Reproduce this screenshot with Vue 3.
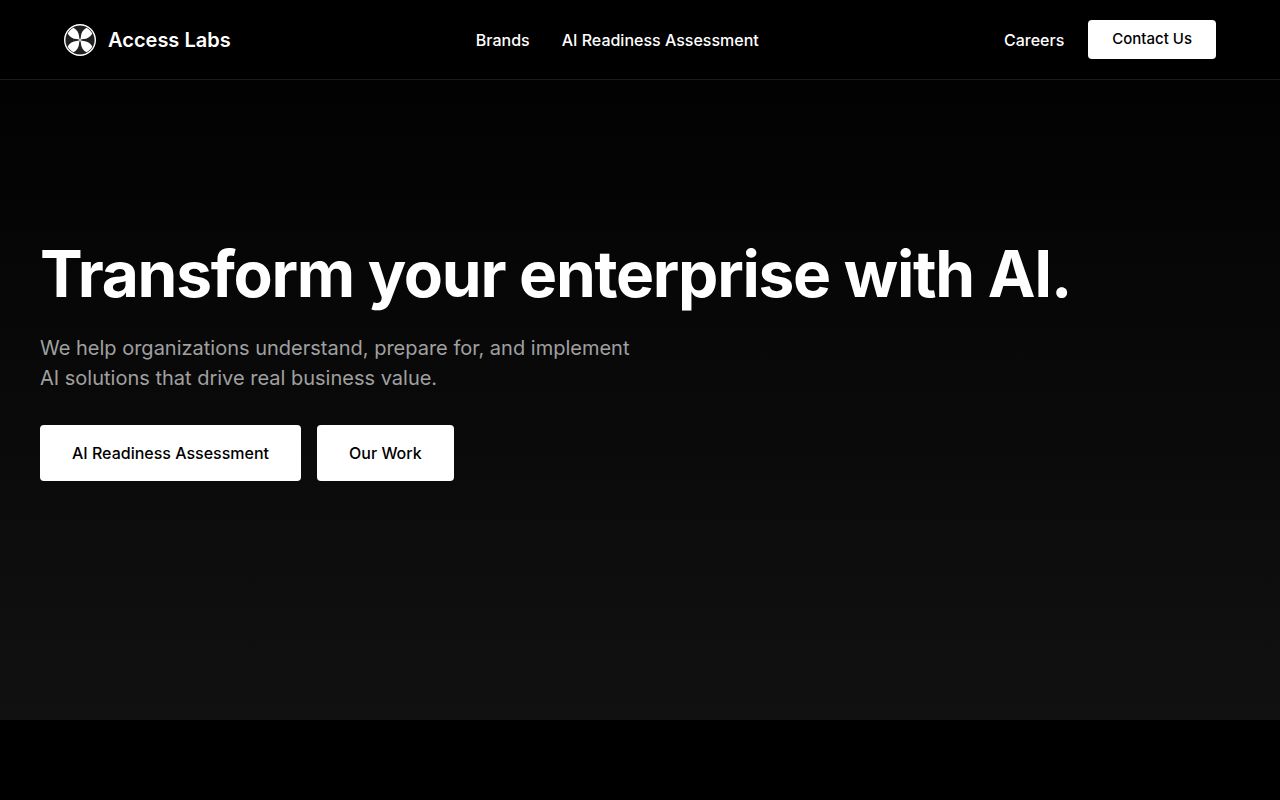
<script setup>
const links = ['Brands', 'AI Readiness Assessment']
const petals = [0, 90, 180, 270]
</script>

<template>
  <div class="page">
    <header class="header">
      <a class="brand" href="#">
        <svg class="logo" viewBox="0 0 32 32" aria-hidden="true">
          <circle cx="16" cy="16" r="15.300" fill="#202020" stroke="#fff" stroke-width="1.400" />
          <path
            v-for="angle in petals"
            :key="angle"
            :transform="`rotate(${angle} 16 16)`"
            fill="#fff"
            d="M17 17C15.600 15.500 15.200 14.500 15.100 12.500C15 9 13 5.500 9.500 3.700C7.500 4.500 4.500 7.500 3.700 9.500C5.500 13 9 15 12.500 15.100C14.500 15.200 15.500 15.600 17 17Z"
          />
        </svg>
        <span>Access Labs</span>
      </a>
      <nav class="nav" aria-label="Main">
        <a v-for="link in links" :key="link" href="#">{{ link }}</a>
      </nav>
      <div class="actions">
        <a href="#">Careers</a>
        <button class="contact" type="button">Contact Us</button>
      </div>
    </header>
    <main class="hero">
      <h1>Transform your enterprise with AI.</h1>
      <p>We help organizations understand, prepare for, and implement AI solutions that drive real business value.</p>
      <div class="buttons">
        <button type="button">AI Readiness Assessment</button>
        <button type="button">Our Work</button>
      </div>
    </main>
  </div>
</template>

<style>
body { background: #000; }
</style>

<style scoped>
.page { font-family: Inter, sans-serif; color: #fff; }
a { color: inherit; text-decoration: none; }
.header {
  box-sizing: border-box;
  position: fixed;
  top: 0;
  left: 0;
  right: 0;
  height: 80px;
  padding: 0 64px;
  display: flex;
  align-items: center;
  justify-content: space-between;
  border-bottom: 1px solid #1a1a1a;
  background: #000;
  font-size: 16px;
  line-height: 24px;
  font-weight: 500;
}
.brand { display: flex; align-items: center; gap: 12px; font-size: 20px; font-weight: 600; }
.logo { width: 32px; height: 32px; }
.nav { display: flex; gap: 32px; }
.actions { display: flex; align-items: center; gap: 24px; }
button { border: 0; border-radius: 4px; background: #fff; color: #000; font-family: inherit; font-weight: 500; cursor: pointer; }
.contact { padding: 8px 24px 10px; font-size: 15px; line-height: 21px; }
.hero {
  box-sizing: border-box;
  min-height: 90vh;
  padding: 0 40px;
  display: flex;
  flex-direction: column;
  justify-content: center;
  background: linear-gradient(#000, #111);
}
h1 { margin: 0 0 24px; font-size: 64px; line-height: 70px; font-weight: 700; letter-spacing: -0.02em; }
p { margin: 0 0 32px; max-width: 600px; font-size: 20px; line-height: 30px; color: #a0a0a0; }
.buttons { display: flex; gap: 16px; }
.buttons button { padding: 16px 32px; font-size: 16px; line-height: 24px; }
</style>
